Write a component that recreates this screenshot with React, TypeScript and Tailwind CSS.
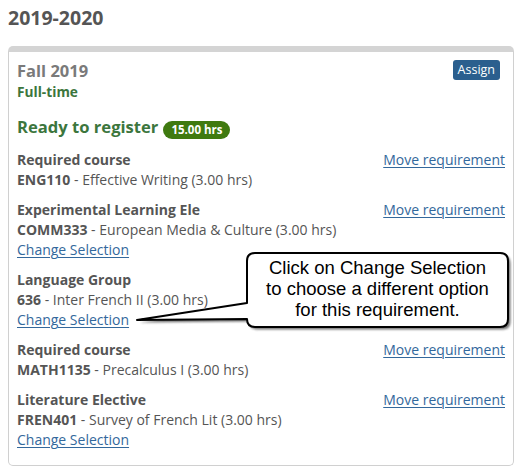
import React from "react";

const linkCls = "text-[#33689c] underline underline-offset-[2px] decoration-1";

type Group = {
  label: string;
  code: string;
  title: string;
  move?: boolean;
  change?: boolean;
};

const groups: Group[] = [
  { label: "Required course", code: "ENG110", title: "Effective Writing (3.00 hrs)", move: true },
  { label: "Experimental Learning Ele", code: "COMM333", title: "European Media & Culture (3.00 hrs)", move: true, change: true },
  { label: "Language Group", code: "636", title: "Inter French II (3.00 hrs)", change: true },
  { label: "Required course", code: "MATH1135", title: "Precalculus I (3.00 hrs)", move: true },
  { label: "Literature Elective", code: "FREN401", title: "Survey of French Lit (3.00 hrs)", move: true, change: true },
];

export default function App() {
  return (
    <div
      className="relative w-[522px] h-[471px] bg-white px-2 pt-[4px] text-[#555]"
      style={{ fontFamily: '"Open Sans", "Liberation Sans", sans-serif' }}
    >
      <h2 className="text-[19.5px] leading-[28px] font-bold text-[#555] mb-[14px]">2019-2020</h2>

      <div className="border border-[#d0d0d0] border-t-[6px] border-t-[#d4d4d4] rounded-[5px] px-2 pt-2 pb-[15px]">
        <div className="flex justify-between items-start">
          <div>
            <div className="text-[16.5px] leading-[22px] font-bold text-[#7a7a7a]">Fall 2019</div>
            <div className="text-[13.7px] leading-[20px] font-bold text-[#3c763d]">Full-time</div>
          </div>
          <div className="mr-[5px] h-[20px] px-[5px] rounded-[3px] bg-[#2b5f8e] text-white text-[12.5px] leading-[20px]">
            Assign
          </div>
        </div>

        <div className="mt-[14px] flex items-start h-[22px]">
          <span className="text-[16.6px] leading-[22px] font-bold text-[#3c763d]">Ready to register</span>
          <span className="ml-[5px] mt-[5px] h-[18px] px-[8px] rounded-full bg-[#3f7a10] text-white text-[11.5px] leading-[18px] font-bold">
            15.00 hrs
          </span>
        </div>

        <div className="mt-[12px] flex flex-col gap-[10px] text-[14px] leading-[20px]">
          {groups.map((g, i) => (
            <div key={i} className="flex justify-between items-start">
              <div>
                <div className="font-bold">{g.label}</div>
                <div>
                  <span className="font-bold">{g.code}</span> - {g.title}
                </div>
                {g.change && <div className={linkCls}>Change Selection</div>}
              </div>
              {g.move && <div className={linkCls}>Move requirement</div>}
            </div>
          ))}
        </div>
      </div>

      <svg
        className="absolute left-0 top-0 pointer-events-none"
        width="522"
        height="471"
        viewBox="0 0 522 471"
      >
        <defs>
          <filter id="sh" x="-10%" y="-10%" width="130%" height="140%">
            <feGaussianBlur stdDeviation="1.2" />
          </filter>
        </defs>
        <path
          d="M255 253 H500 Q508 253 508 261 V319 Q508 327 500 327 H255 Q247 327 247 319 L137 320 L247 303 V261 Q247 253 255 253 Z"
          fill="#444"
          opacity="0.75"
          transform="translate(2.5 2.5)"
          filter="url(#sh)"
        />
        <path
          d="M255 253 H500 Q508 253 508 261 V319 Q508 327 500 327 H255 Q247 327 247 319 L137 320 L247 303 V261 Q247 253 255 253 Z"
          fill="#fff"
          stroke="#000"
          strokeWidth="2"
          strokeLinejoin="round"
        />
      </svg>
      <div
        className="absolute left-[249px] top-[257px] w-[257px] text-center text-black text-[18.5px] leading-[21px]"
        style={{ fontFamily: '"Liberation Sans", Arial, sans-serif' }}
      >
        Click on Change Selection
        <br />
        to choose a different option
        <br />
        for this requirement.
      </div>
    </div>
  );
}
